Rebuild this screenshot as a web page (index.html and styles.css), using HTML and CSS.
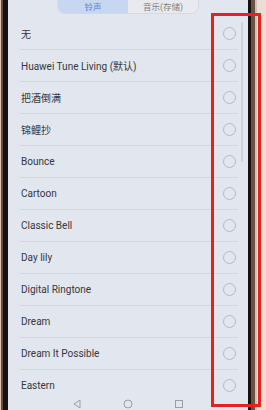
FILE: index.html
```html
<!DOCTYPE html>
<html lang="zh">
<head>
<meta charset="utf-8">
<link rel="stylesheet" href="styles.css">
</head>
<body>
<div class="device">
  <div class="bezel-left"></div>
  <div class="screen">
    <div class="header">
      <div class="tabs">
        <div class="tab active">铃声</div>
        <div class="tab">音乐(存储)</div>
      </div>
    </div>
    <div class="list">
      <div class="row"><span class="label">无</span><span class="radio"></span></div>
      <div class="row"><span class="label">Huawei Tune Living (默认)</span><span class="radio"></span></div>
      <div class="row"><span class="label">把酒倒满</span><span class="radio"></span></div>
      <div class="row"><span class="label">锦鲤抄</span><span class="radio"></span></div>
      <div class="row"><span class="label">Bounce</span><span class="radio"></span></div>
      <div class="row"><span class="label">Cartoon</span><span class="radio"></span></div>
      <div class="row"><span class="label">Classic Bell</span><span class="radio"></span></div>
      <div class="row"><span class="label">Day lily</span><span class="radio"></span></div>
      <div class="row"><span class="label">Digital Ringtone</span><span class="radio"></span></div>
      <div class="row"><span class="label">Dream</span><span class="radio"></span></div>
      <div class="row"><span class="label">Dream It Possible</span><span class="radio"></span></div>
      <div class="row"><span class="label">Eastern</span><span class="radio"></span></div>
    </div>
    <div class="scrollbar"></div>
    <div class="navbar">
      <svg class="nav-icon" viewBox="0 0 10 10"><path d="M8 1 L2 5 L8 9 Z" fill="none" stroke="#9a9ea8" stroke-width="1"/></svg>
      <svg class="nav-icon" viewBox="0 0 10 10"><circle cx="5" cy="5" r="4" fill="none" stroke="#9a9ea8" stroke-width="1"/></svg>
      <svg class="nav-icon" viewBox="0 0 10 10"><rect x="1.5" y="1.5" width="7" height="7" fill="none" stroke="#9a9ea8" stroke-width="1"/></svg>
    </div>
  </div>
  <div class="bezel-right"></div>
  <div class="outside"></div>
  <div class="highlight"></div>
</div>
</body>
</html>
```
FILE: styles.css
```css
html, body {
  margin: 0;
  padding: 0;
  width: 266px;
  height: 410px;
  overflow: hidden;
  background: #eadfd2;
}
.device {
  position: relative;
  display: flex;
  width: 266px;
  height: 410px;
}
.bezel-left {
  width: 8px;
  flex: none;
  background: linear-gradient(to right, #d9c6bd 0, #d9c6bd 1px, #6b4838 1px, #6b4838 3px, #161213 3px);
}
.screen {
  width: 240px;
  flex: none;
  position: relative;
  display: flex;
  flex-direction: column;
  background: #e2e6ee;
  overflow: hidden;
  font-family: Roboto, "Noto Sans CJK SC", sans-serif;
}
.header {
  height: 18px;
  flex: none;
  display: flex;
  justify-content: center;
}
.tabs {
  margin-top: -5px;
  height: 18px;
  width: 140px;
  display: flex;
  border: 1px solid #d3d8e2;
  border-top: none;
  border-radius: 0 0 8px 8px;
  overflow: hidden;
}
.tab {
  flex: 1;
  display: flex;
  align-items: center;
  justify-content: center;
  padding-top: 4px;
  font-size: 8.5px;
  color: #7c7f86;
  background: #e8eaef;
}
.tab.active {
  background: #c8d7f0;
  color: #4f86dc;
}
.list {
  flex: 1;
  overflow: hidden;
}
.row {
  height: 32px;
  box-sizing: border-box;
  margin: 0 10px 0 12px;
  display: flex;
  align-items: center;
  justify-content: space-between;
  border-bottom: 1px solid #d2d6df;
}
.label {
  font-size: 10px;
  color: #34363d;
  padding-left: 1px;
}
.radio {
  width: 11px;
  height: 11px;
  border: 1px solid #b4b8c1;
  border-radius: 50%;
  margin-right: 2px;
}
.scrollbar {
  position: absolute;
  left: 233px;
  top: 22px;
  width: 2px;
  height: 140px;
  background: #cdd1da;
  border-radius: 1px;
}
.navbar {
  height: 18px;
  flex: none;
  display: flex;
  justify-content: center;
  gap: 41px;
  padding-top: 7px;
  box-sizing: border-box;
  background: #e2e6ee;
}
.nav-icon {
  width: 10px;
  height: 10px;
}
.bezel-right {
  width: 9px;
  flex: none;
  background: linear-gradient(to right, #141112 0, #141112 3px, #6e5040 3px, #6e5040 7px, #cfc2b6 7px);
}
.outside {
  flex: 1;
  background: #eadfd2;
}
.highlight {
  position: absolute;
  left: 211px;
  top: 13px;
  width: 50px;
  height: 394px;
  box-sizing: border-box;
  border: 3px solid #e8211d;
}
```
